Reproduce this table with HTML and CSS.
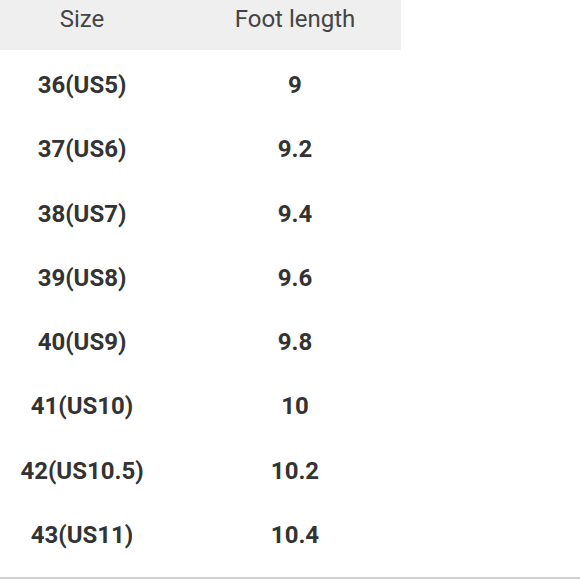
FILE: index.html
```html
<!DOCTYPE html>
<html lang="en">
<head>
    <meta name="viewport" content="width=device-width, initial-scale=1">
    <title>Size chart</title>
    <link rel="stylesheet" href="styles.css">
</head>
<body>
<div class="chart">
    <!-- cabecera gris -->
    <div class="head">
        <div class="cell">Size</div>
        <div class="cell col2">Foot length</div>
    </div>
    <div class="rows">
        <div class="row"><div class="cell">36(US5)</div><div class="cell col2">9</div></div>
        <div class="row"><div class="cell">37(US6)</div><div class="cell col2">9.2</div></div>
        <div class="row"><div class="cell">38(US7)</div><div class="cell col2">9.4</div></div>
        <div class="row"><div class="cell">39(US8)</div><div class="cell col2">9.6</div></div>
        <div class="row"><div class="cell">40(US9)</div><div class="cell col2">9.8</div></div>
        <div class="row"><div class="cell">41(US10)</div><div class="cell col2">10</div></div>
        <div class="row"><div class="cell">42(US10.5)</div><div class="cell col2">10.2</div></div>
        <div class="row"><div class="cell">43(US11)</div><div class="cell col2">10.4</div></div>
    </div>
</div>
</body>
</html>
```

FILE: styles.css
```css
body {
    margin: 0;
    font-family: Roboto, "Liberation Sans", sans-serif;
    background: #fff;
}

.chart {
    width: 580px;
    height: 577px;
    border-bottom: 2px solid #cfcfcf;
}

.head, .row {
    display: grid;
    grid-template-columns: 164px 237px;
    text-align: center;
}

.head {
    width: 401px;
    height: 50px;
    background-color: #efefef;
    color: #444;
    font-size: 24px;
    line-height: 38px;
}

.rows {
    padding-top: 3px;
}

.row {
    height: 64.3px;
    line-height: 64px;
    font-size: 24px;
    font-weight: bold;
    color: #333;
}

.col2 {
    padding-left: 25px;
}
```
